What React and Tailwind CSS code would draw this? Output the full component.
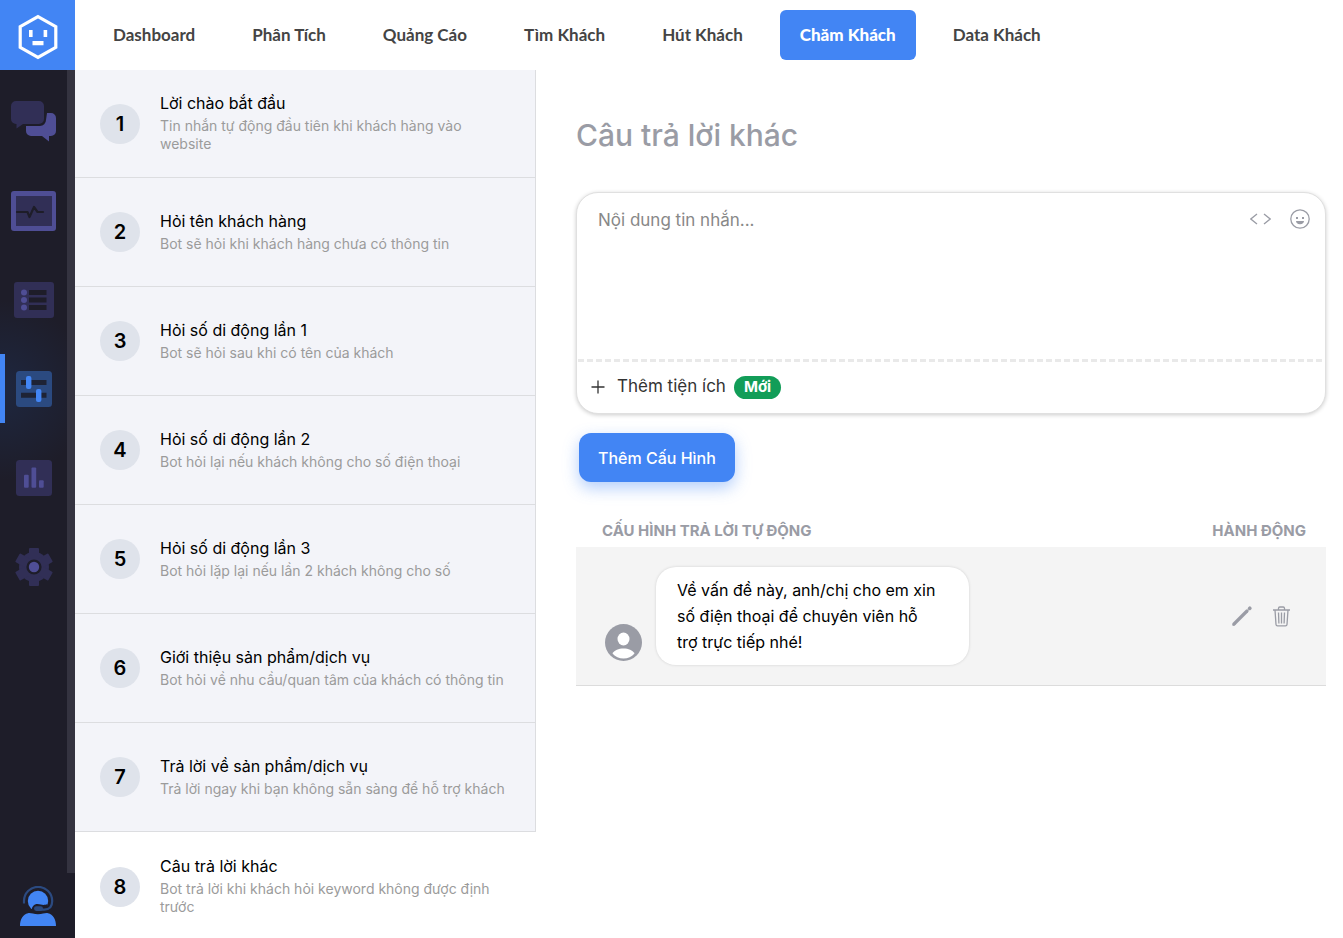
import { useState } from 'react';

const tabs = ['Dashboard', 'Phân Tích', 'Quảng Cáo', 'Tìm Khách', 'Hút Khách', 'Chăm Khách', 'Data Khách'];

const steps = [
  { id: 1, name: 'Lời chào bắt đầu', description: 'Tin nhắn tự động đầu tiên khi khách hàng vào website' },
  { id: 2, name: 'Hỏi tên khách hàng', description: 'Bot sẽ hỏi khi khách hàng chưa có thông tin' },
  { id: 3, name: 'Hỏi số di động lần 1', description: 'Bot sẽ hỏi sau khi có tên của khách' },
  { id: 4, name: 'Hỏi số di động lần 2', description: 'Bot hỏi lại nếu khách không cho số điện thoại' },
  { id: 5, name: 'Hỏi số di động lần 3', description: 'Bot hỏi lặp lại nếu lần 2 khách không cho số' },
  { id: 6, name: 'Giới thiệu sản phẩm/dịch vụ', description: 'Bot hỏi về nhu cầu/quan tâm của khách có thông tin' },
  { id: 7, name: 'Trả lời về sản phẩm/dịch vụ', description: 'Trả lời ngay khi bạn không sẵn sàng để hỗ trợ khách' },
  { id: 8, name: 'Câu trả lời khác', description: 'Bot trả lời khi khách hỏi keyword không được định trước' },
];

const Logo = () => (
  <svg width="40" height="46" viewBox="0 0 40 46" fill="none">
    <path d="M20 2.6 37.8 12.6V33.4L20 43.4 2.2 33.4V12.6Z" stroke="#fff" strokeWidth="3.2" />
    <path d="M11 16h3.6v7H11zM25.6 16h3.6v7h-3.6zM14.5 27h11v4.2h-11z" fill="#fff" />
  </svg>
);

const ChatIcon = () => (
  <svg width="45" height="41" viewBox="0 0 45 41">
    <path d="M36 12h4a5 5 0 0 1 5 5v13a5 5 0 0 1-5 5h-2v5.6L31 35H20a5 5 0 0 1-5-5v-5h14a6 6 0 0 0 6-6z" fill="#4f4e95" />
    <path d="M5 0h23a5 5 0 0 1 5 5v13a5 5 0 0 1-5 5H12l-6.500 4.500V23H5a5 5 0 0 1-5-5V5a5 5 0 0 1 5-5z" fill="#312f56" />
  </svg>
);

const MonitorIcon = () => (
  <svg width="45" height="40" viewBox="0 0 45 40" fill="none">
    <rect width="45" height="40" rx="3" fill="#4f4e95" />
    <rect x="5" y="5" width="36" height="30" fill="#312f56" />
    <path d="M6 21h10.500l2 5 4.500-10 3.500 5H32" stroke="#1e1d29" strokeWidth="2.200" strokeLinecap="round" strokeLinejoin="round" />
  </svg>
);

const ListIcon = () => (
  <svg width="40" height="36" viewBox="0 0 40 36">
    <rect width="40" height="36" rx="3" fill="#312f56" />
    <g fill="#4f4e95">
      <circle cx="10" cy="10.500" r="3" />
      <circle cx="10" cy="18" r="3" />
      <circle cx="10" cy="25.500" r="3" />
    </g>
    <path d="M15 8h17.500v5H15zM15 15.500h17.500v5H15zM15 23h17.500v5H15z" fill="#1e1d29" />
  </svg>
);

const SlidersIcon = () => (
  <svg width="36" height="36" viewBox="0 0 36 36">
    <rect width="36" height="36" rx="3.500" fill="#2b4a80" />
    <path d="M5 9h25.500v5H5zM5 21.700h25.500v5H5z" fill="#1e2335" />
    <rect x="10" y="5" width="5.400" height="13" rx="2" fill="#4285f4" />
    <rect x="20" y="18" width="5.400" height="13" rx="2" fill="#4285f4" />
  </svg>
);

const ChartIcon = () => (
  <svg width="36" height="36" viewBox="0 0 36 36">
    <rect width="36" height="36" rx="3.500" fill="#312f56" />
    <g fill="#4f4e95">
      <rect x="8" y="14.700" width="4.700" height="13" rx="1" />
      <rect x="15.500" y="7.500" width="4.700" height="20.200" rx="1" />
      <rect x="23" y="20.200" width="4.700" height="7.500" rx="1" />
    </g>
  </svg>
);

const GearIcon = () => (
  <svg width="38" height="38" viewBox="0 0 38 38">
    <g fill="#312f56">
      <circle cx="19" cy="19" r="15" />
      <rect x="14" y="0" width="10" height="38" rx="1" />
      <rect x="14" y="0" width="10" height="38" rx="1" transform="rotate(60 19 19)" />
      <rect x="14" y="0" width="10" height="38" rx="1" transform="rotate(120 19 19)" />
    </g>
    <circle cx="19" cy="19" r="7.600" fill="#1e1d29" />
    <circle cx="19" cy="19" r="5.200" fill="#4f4e95" />
  </svg>
);

const AgentIcon = () => (
  <svg width="36" height="40" viewBox="0 0 36 40" fill="none">
    <circle cx="18" cy="15" r="10.200" fill="#4285f4" />
    <path d="M11.500 25.500c0-5 2.500-7.500 6-7.500 4 0 5 2 10 0v9h-16z" fill="#1e1d29" />
    <path d="M4 17.500V15a14 14 0 0 1 28.200 0c0 5.500-3 8.600-8 8.600H20" stroke="#2b4a80" strokeWidth="2.200" />
    <rect x="14" y="20.300" width="9" height="4.600" rx="2.300" fill="#2b4a80" />
    <path d="M0 40c0-7 3-11.800 8-12.800 3-.5 5 1 10 1s7-1.500 10-1c5 1 8 5.800 8 12.800z" fill="#4285f4" />
  </svg>
);

const menu = [
  { id: 'chat', label: 'Tin nhắn', Icon: ChatIcon },
  { id: 'monitor', label: 'Theo dõi', Icon: MonitorIcon },
  { id: 'list', label: 'Danh sách', Icon: ListIcon },
  { id: 'config', label: 'Cấu hình', Icon: SlidersIcon },
  { id: 'report', label: 'Báo cáo', Icon: ChartIcon },
  { id: 'settings', label: 'Cài đặt', Icon: GearIcon },
];

const Sidebar = () => (
  <aside className="flex w-[75px] shrink-0 flex-col bg-[#1e1d29]">
    <a href="#" aria-label="Trang chủ" className="flex h-[70px] shrink-0 items-center justify-center bg-[#4285f4] pt-1">
      <Logo />
    </a>
    <div className="flex min-h-0 flex-1">
      <nav className="flex flex-1 flex-col gap-5 overflow-hidden bg-[radial-gradient(circle_at_0_320px,#1e2740,#1e1d29_90px)] pt-[17px]">
        {menu.map(({ id, label, Icon }) => (
          <button
            key={id}
            aria-label={label}
            className={
              id === 'config'
                ? 'flex h-[69px] shrink-0 items-center justify-center border-l-5 border-[#4285f4] pr-[5px]'
                : 'flex h-[69px] shrink-0 items-center justify-center'
            }
          >
            <Icon />
          </button>
        ))}
      </nav>
      <div className="w-2 bg-[#343340]" />
    </div>
    <button aria-label="Tài khoản" className="flex h-[65px] shrink-0 items-center justify-center">
      <AgentIcon />
    </button>
  </aside>
);

const TopNav = () => (
  <nav className="flex h-[70px] shrink-0 items-center gap-[17px] pl-[18px] font-['Lato',sans-serif]">
    {tabs.map((tab) => (
      <a
        href="#"
        key={tab}
        className={
          tab === 'Chăm Khách'
            ? 'flex h-[50px] items-center rounded-md bg-[#4285f4] px-5 text-[17px] font-black whitespace-nowrap text-white'
            : 'flex h-[50px] items-center rounded-md px-5 text-[17px] font-bold whitespace-nowrap text-[#444]'
        }
      >
        {tab}
      </a>
    ))}
  </nav>
);

const StepList = ({ current, onSelect }) => (
  <div className="w-[461px] shrink-0 overflow-hidden">
    {steps.map((step) => (
      <button
        key={step.id}
        onClick={() => onSelect(step.id)}
        className={
          step.id === current
            ? 'flex h-[109px] w-full items-center gap-5 bg-white pr-5 pl-[25px] text-left first:h-[108px]'
            : 'flex h-[109px] w-full items-center gap-5 border-r border-b border-[#dcdde0] bg-[#f3f4f9] pr-5 pl-[25px] text-left first:h-[108px]'
        }
      >
        <span className="flex size-10 shrink-0 items-center justify-center rounded-full bg-[#dfe3eb] text-xl font-semibold text-black">
          {step.id}
        </span>
        <span className="pb-[2px]">
          <span className="mb-[3px] block text-base leading-[22px] text-black">{step.name}</span>
          <span className="block text-[14px] leading-[18px] text-[#9b9b9b]">{step.description}</span>
        </span>
      </button>
    ))}
  </div>
);

const MessageBox = () => {
  const [message, setMessage] = useState('');

  return (
    <div className="rounded-[22px] border border-[#e0e0e0] bg-white shadow-[0_1px_4px_rgba(0,0,0,0.2)]">
      <div className="flex h-[166px] items-start pt-[14px] pr-[15px] pl-[21px]">
        <textarea
          aria-label="Nội dung tin nhắn"
          placeholder="Nội dung tin nhắn..."
          value={message}
          onChange={(e) => setMessage(e.target.value)}
          className="h-full flex-1 resize-none text-[17px] leading-[26px] outline-none placeholder:text-[#888]"
        />
        <div className="flex gap-[19px] pt-[2px] text-[#9a9ca5]">
          <button aria-label="Chèn mã">
            <svg width="21" height="20" viewBox="0 0 21 20" fill="none" stroke="currentColor" strokeWidth="1.300">
              <path d="M7 5 .8 10 7 15M14 5l6.200 5-6.200 5" />
            </svg>
          </button>
          <button aria-label="Biểu tượng cảm xúc">
            <svg width="20" height="20" viewBox="0 0 20 20" fill="none">
              <circle cx="10" cy="10" r="9.200" stroke="currentColor" strokeWidth="1.300" />
              <path d="M6 8h2v2H6zM12 8h2v2h-2zM6 12h8c0 2-1.500 3.200-4 3.200S6 14 6 12z" fill="currentColor" />
            </svg>
          </button>
        </div>
      </div>
      <div className="mx-px h-[3px] bg-[repeating-linear-gradient(90deg,#e9e9e9_0_6px,transparent_6px_9px)]" />
      <button className="flex h-[51px] items-center pb-px pl-[14px] text-[17px] text-[#333]">
        <svg width="14" height="14" viewBox="0 0 14 14" stroke="currentColor" strokeWidth="1.300">
          <path d="M7 .5v13M.5 7h13" />
        </svg>
        <span className="ml-3">Thêm tiện ích</span>
        <span className="ml-2 flex h-[23px] items-center rounded-full bg-[#129d58] px-[10px] text-[15px] font-bold text-white">Mới</span>
      </button>
    </div>
  );
};

const ReplyTable = () => (
  <table className="mt-8 w-full">
    <thead>
      <tr className="h-[33px] text-[15px] text-[#9a9ca5]">
        <th className="pt-[2px] pl-[26px] text-left font-bold">CẤU HÌNH TRẢ LỜI TỰ ĐỘNG</th>
        <th className="pt-[2px] pr-5 text-right font-bold">HÀNH ĐỘNG</th>
      </tr>
    </thead>
    <tbody>
      <tr className="border-b border-[#dcdcdc] bg-[#f4f4f4]">
        <td className="py-5 pl-[29px]">
          <div className="flex items-end gap-[14px]">
            <svg className="mb-1 shrink-0" width="37" height="37" viewBox="0 0 37 37">
              <circle cx="18.500" cy="18.500" r="18.500" fill="#9a9ca5" />
              <ellipse cx="18.500" cy="15" rx="6" ry="6.500" fill="#fff" />
              <path d="M7.500 29.500c2-3.500 6-5 11-5s9 1.500 11 5c-3 3.300-6.500 5-11 5s-8-1.700-11-5z" fill="#fff" />
            </svg>
            <p className="w-[313px] rounded-[20px] bg-white py-[10px] pr-[30px] pl-[21px] text-base leading-[26px] text-black shadow-[0_0_3px_rgba(0,0,0,0.15)]">
              Về vấn đề này, anh/chị cho em xin số điện thoại để chuyên viên hỗ trợ trực tiếp nhé!
            </p>
          </div>
        </td>
        <td className="pr-9">
          <div className="flex items-center justify-end gap-[21px] text-[#9a9ca5]">
            <button aria-label="Sửa">
              <svg width="20" height="20" viewBox="0 0 20 20" fill="none" stroke="currentColor" strokeLinecap="round">
                <path d="M2 18 15 5" strokeWidth="3.200" />
                <path d="M17.600 2.400l.2-.2" strokeWidth="3.600" />
                <path d="M1 19l2-1" strokeWidth="1.500" />
              </svg>
            </button>
            <button aria-label="Xóa">
              <svg width="17" height="21" viewBox="0 0 17 21" fill="none" stroke="currentColor" strokeWidth="1.300">
                <path d="M0 4h17M5.500 3.800V2.200A1.300 1.300 0 0 1 6.800 1h3.400a1.300 1.300 0 0 1 1.300 1.200v1.600M2 4l1 14.500a1.500 1.500 0 0 0 1.500 1.400h8a1.500 1.500 0 0 0 1.500-1.400L15 4M5.500 6.500l.4 11M8.500 6.500v11M11.500 6.500l-.4 11" />
              </svg>
            </button>
          </div>
        </td>
      </tr>
    </tbody>
  </table>
);

export default function App() {
  const [current, setCurrent] = useState(8);

  return (
    <div className="flex h-screen bg-white font-['Inter',sans-serif]">
      <Sidebar />
      <div className="flex min-w-0 flex-1 flex-col">
        <TopNav />
        <div className="flex min-h-0 flex-1">
          <StepList current={current} onSelect={setCurrent} />
          <main className="min-w-0 flex-1 pt-[45px] pr-[17px] pl-10">
            <h1 className="mb-[37px] text-3xl leading-10 font-medium text-[#9a9ca5]">Câu trả lời khác</h1>
            <MessageBox />
            <button className="mt-[19px] ml-[3px] h-[49px] rounded-xl bg-[#4285f4] px-[19px] text-base font-medium text-white shadow-[0_6px_16px_rgba(66,133,244,0.4)]">
              Thêm Cấu Hình
            </button>
            <ReplyTable />
          </main>
        </div>
      </div>
    </div>
  );
}
